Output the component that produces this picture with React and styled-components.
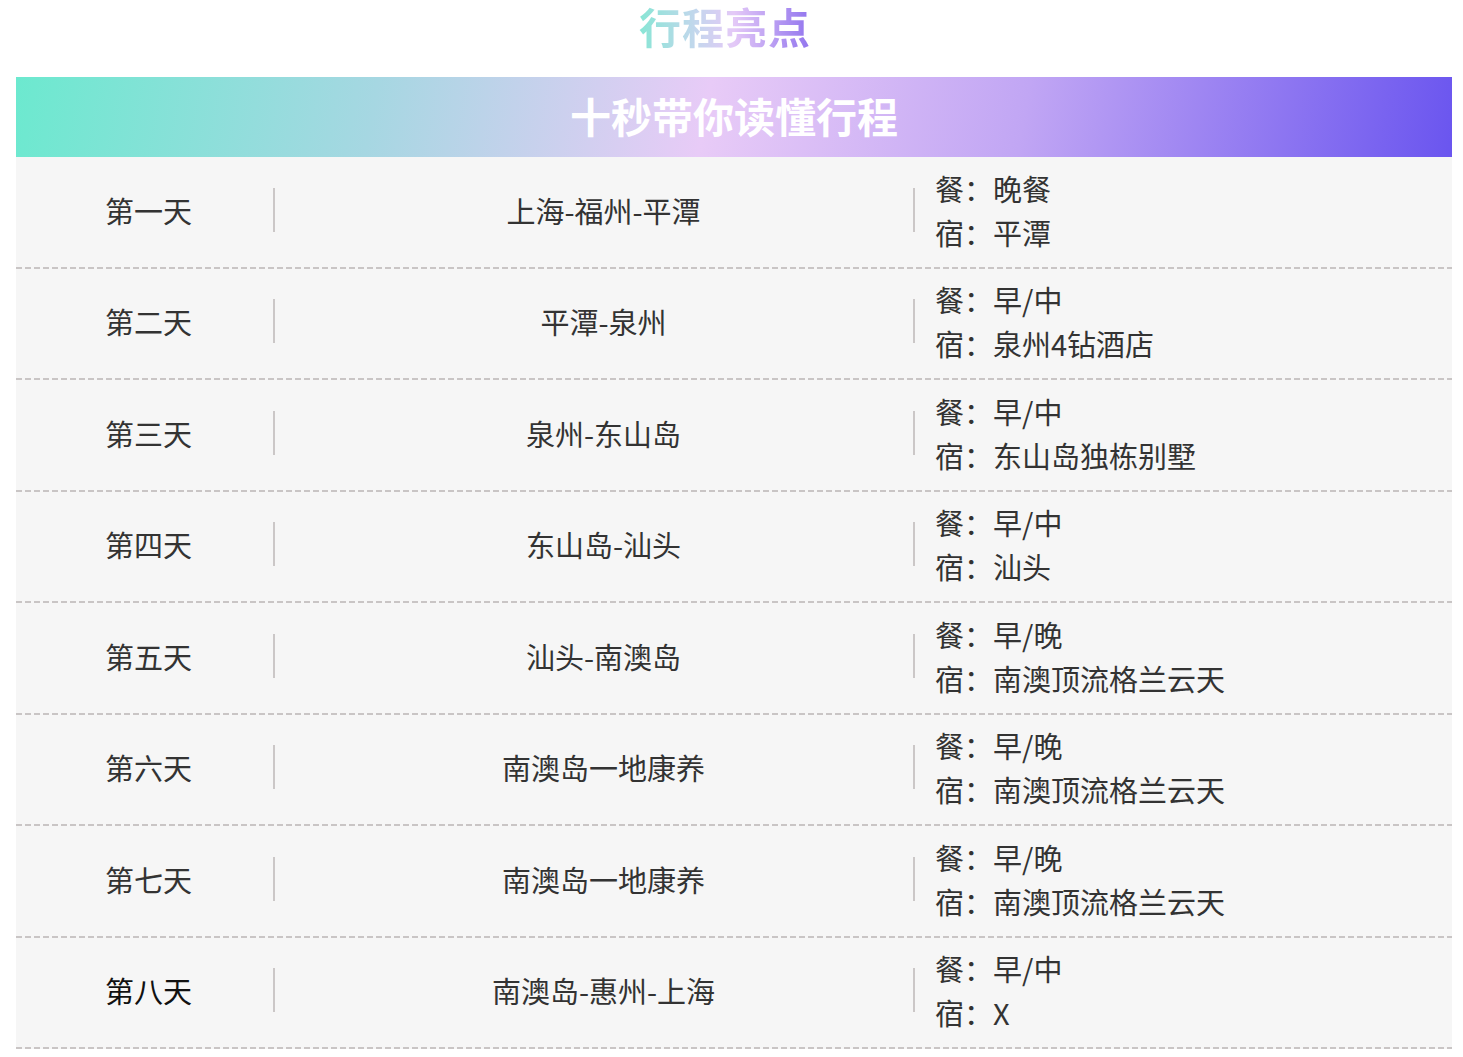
import React from "react";
import styled, { createGlobalStyle } from "styled-components";

const GlobalStyle = createGlobalStyle`
    html, body {
        margin: 0;
        padding: 0;
        background: #ffffff;
        font-family: "Noto Sans CJK SC", "Noto Sans", sans-serif;
    }
`;

const schedule = [
    { day: "第一天", route: "上海-福州-平潭", meal: "晚餐", stay: "平潭" },
    { day: "第二天", route: "平潭-泉州", meal: "早/中", stay: "泉州4钻酒店" },
    { day: "第三天", route: "泉州-东山岛", meal: "早/中", stay: "东山岛独栋别墅" },
    { day: "第四天", route: "东山岛-汕头", meal: "早/中", stay: "汕头" },
    { day: "第五天", route: "汕头-南澳岛", meal: "早/晚", stay: "南澳顶流格兰云天" },
    { day: "第六天", route: "南澳岛一地康养", meal: "早/晚", stay: "南澳顶流格兰云天" },
    { day: "第七天", route: "南澳岛一地康养", meal: "早/晚", stay: "南澳顶流格兰云天" },
    { day: "第八天", route: "南澳岛-惠州-上海", meal: "早/中", stay: "X", dark: true },
];

const Page = styled.div`
    width: 1436px;
    margin-left: 16px;
    display: flex;
    flex-direction: column;
    align-items: center;
`;

const Title = styled.h1`
    margin: 0 18px 25px 0;
    padding: 0 2px;
    line-height: 52px;
    font-size: 42px;
    font-weight: 700;
    letter-spacing: 1px;
    background: linear-gradient(90deg, #86e6d4 0%, #c6d6ee 35%, #e4c9f7 55%, #8f72ee 100%);
    -webkit-background-clip: text;
    background-clip: text;
    color: transparent;
`;

const Table = styled.div`
    width: 100%;
    display: flex;
    flex-direction: column;
    background: #f6f6f6;
`;

const Banner = styled.div`
    height: 80px;
    display: flex;
    align-items: center;
    justify-content: center;
    background: linear-gradient(100deg, #6ce9cf 0%, #a6d7e2 25%, #e8cbf7 48%, #c1a6f4 70%, #6a55ef 100%);
    color: #ffffff;
    font-size: 41px;
    font-weight: 700;
    line-height: 1;
    padding-bottom: 3px;
    box-sizing: border-box;
`;

const Row = styled.div`
    height: 111.5px;
    box-sizing: border-box;
    display: flex;
    align-items: center;
    padding-bottom: 6px;
    color: #333333;
    font-size: 29px;
    background: linear-gradient(90deg, #c9c5c5 6px, transparent 6px) left bottom / 9px 2px repeat-x;
`;

const DayCell = styled.div`
    width: 257px;
    padding-left: 8px;
    box-sizing: border-box;
    text-align: center;
    color: ${(p) => (p.$dark ? "#111111" : "#333333")};
`;

const Divider = styled.div`
    width: 2px;
    height: 44px;
    background: #cbc7c7;
`;

const RouteCell = styled.div`
    width: 638px;
    padding-left: 19px;
    box-sizing: border-box;
    text-align: center;
`;

const InfoCell = styled.div`
    flex: 1;
    padding-left: 20px;
    display: flex;
    flex-direction: column;
`;

const InfoLine = styled.div`
    line-height: 44px;
    white-space: nowrap;
`;

export default function App() {
    return (
        <>
            <GlobalStyle />
            <Page>
                <Title>行程亮点</Title>
                <Table>
                    <Banner>十秒带你读懂行程</Banner>
                    {schedule.map((item, i) => (
                        <Row key={i}>
                            <DayCell $dark={item.dark}>{item.day}</DayCell>
                            <Divider />
                            <RouteCell>{item.route}</RouteCell>
                            <Divider />
                            <InfoCell>
                                <InfoLine>餐：{item.meal}</InfoLine>
                                <InfoLine>宿：{item.stay}</InfoLine>
                            </InfoCell>
                        </Row>
                    ))}
                </Table>
            </Page>
        </>
    );
}
